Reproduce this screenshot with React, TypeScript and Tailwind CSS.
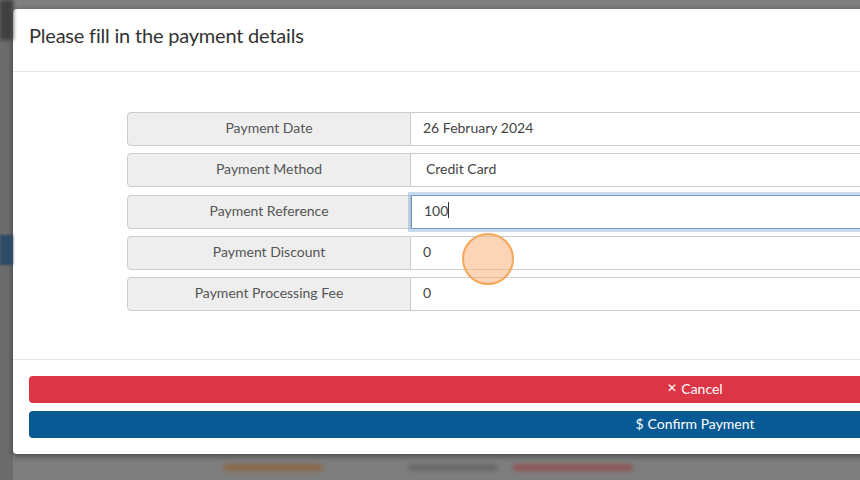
const rows = [
    { label: "Payment Date", value: "26 February 2024", kind: "text" },
    { label: "Payment Method", value: "Credit Card", kind: "select" },
    { label: "Payment Reference", value: "100", kind: "focus" },
    { label: "Payment Discount", value: "0", kind: "text" },
    { label: "Payment Processing Fee", value: "0", kind: "text" },
];

const Row = ({ label, value, kind }: { label: string; value: string; kind: string }) => {
    return (
        <div className="flex h-[34px] w-full">
            <div className="w-1/4 shrink-0 flex items-center justify-center pb-[3px] bg-[#eeeeee] border border-[#cccccc] rounded-l-[4px] text-[14px] text-[#555555]">
                {label}
            </div>
            {kind === "focus" ? (
                <div className="flex-1 flex items-center pb-[3px] border border-[#6f97c4] shadow-[0_0_0_3px_rgba(102,150,210,0.35)] bg-white px-[12px] text-[14px] text-[#444444] rounded-r-[4px]">
                    <span>{value}</span>
                    <span className="w-px h-[16px] bg-[#333333]" />
                </div>
            ) : (
                <div
                    className={`flex-1 flex items-center pb-[3px] border border-l-0 border-[#cccccc] bg-white text-[14px] text-[#444444] rounded-r-[4px] ${kind === "select" ? "px-[15px]" : "px-[12px]"}`}
                >
                    {value}
                </div>
            )}
        </div>
    );
};

const App = () => {
    return (
        <div className="w-[860px] h-[480px] overflow-hidden bg-[#7e7e7e] flex font-['Lato','Liberation_Sans',sans-serif] relative">
            {/* blurred page behind the backdrop */}
            <div className="w-[13px] shrink-0 flex flex-col bg-[#6c6c6c]">
                <div className="h-[40px] bg-[#3f3f3f] blur-[2px]" />
                <div className="h-[195px]" />
                <div className="h-[30px] bg-[#2d4a66] blur-[1px]" />
            </div>
            <div className="flex flex-col pt-[9px]">
                <div className="w-[1364px] h-[445px] bg-white rounded-[4px] shadow-[0_2px_6px_rgba(0,0,0,0.45)] flex flex-col">
                    <div className="h-[63px] border-b border-[#e5e5e5] flex items-start pt-[16px] px-[16px]">
                        <h4 className="text-[20px] text-[#333333] leading-none tracking-[-0.2px]">Please fill in the payment details</h4>
                    </div>
                    <div className="flex-1 flex justify-center pt-[40px]">
                        <div className="w-[1136px] flex flex-col gap-[7.25px]">
                            {rows.map((r) => (
                                <Row key={r.label} label={r.label} value={r.value} kind={r.kind} />
                            ))}
                        </div>
                    </div>
                    <div className="border-t border-[#e5e5e5] px-[16px] pt-[16px] pb-[16px] flex flex-col gap-[8px]">
                        <button className="h-[27px] w-full rounded-[4px] bg-[#dc3545] text-white text-[14px] flex items-center justify-center gap-[4px] pb-[3px]">
                            <span className="text-[12px]">✕</span>
                            <span>Cancel</span>
                        </button>
                        <button className="h-[27px] w-full rounded-[4px] bg-[#085a94] text-white text-[14px] flex items-center justify-center gap-[4px] pb-[3px]">
                            <span>$</span>
                            <span>Confirm Payment</span>
                        </button>
                    </div>
                </div>
                <div className="flex items-center pl-[210px] pt-[10px] blur-[2px]">
                    <span className="w-[100px] h-[7px] bg-[#8a6a4a] rounded" />
                    <span className="w-[90px] h-[7px] ml-[85px] bg-[#6a6a6a] rounded" />
                    <span className="w-[120px] h-[7px] ml-[15px] bg-[#8f5555] rounded" />
                </div>
            </div>
            {/* click marker */}
            <div className="absolute left-[462px] top-[233px] w-[52px] h-[52px] rounded-full bg-[rgba(250,170,110,0.5)] border-2 border-[#f5a75c]" />
        </div>
    );
};

export default App;
